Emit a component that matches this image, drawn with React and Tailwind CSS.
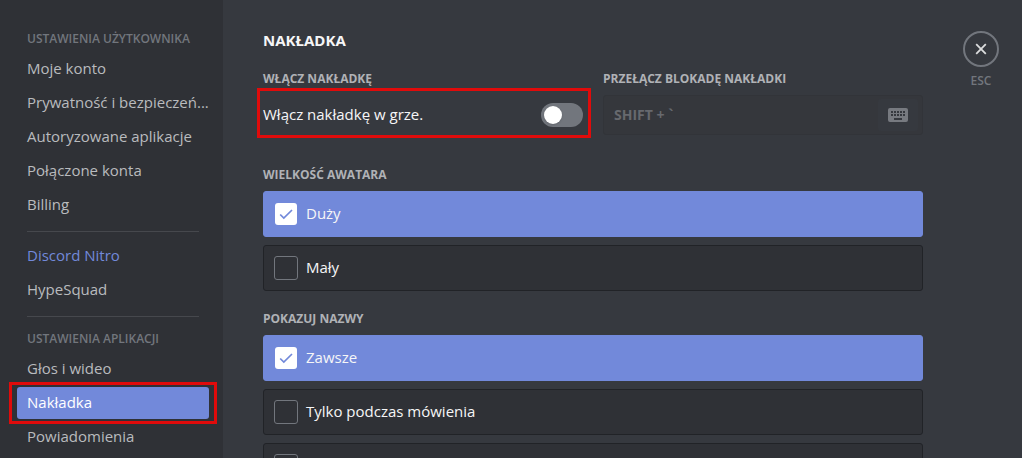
import React, { useState } from "react";

const userLinks = [
  "Moje konto",
  "Prywatność i bezpieczeń...",
  "Autoryzowane aplikacje",
  "Połączone konta",
  "Billing",
];

const appLinks = ["Głos i wideo", "Nakładka", "Powiadomienia"];

const NavItem = ({ label, active, accent, highlighted }) => {
  let tone = "text-[#b9bbbe] hover:bg-[#34373c]";
  if (accent) tone = "text-[#7289da]";
  if (active) tone = "bg-[#7289da] text-white font-medium";

  return (
    <li className="relative">
      <a
        href="#"
        aria-current={active ? "page" : undefined}
        className={`block rounded-[3px] pb-0.5 pl-2.5 text-[15px] leading-[30px] whitespace-nowrap ${tone}`}
      >
        {label}
      </a>
      {highlighted && (
        <span className="pointer-events-none absolute -inset-x-2 -inset-y-[5px] border-3 border-[#e00b0b]" />
      )}
    </li>
  );
};

const NavHeading = ({ children }) => (
  <h2 className="mb-1.5 px-2.5 text-xs leading-4 font-semibold whitespace-nowrap text-[#72767d] uppercase">
    {children}
  </h2>
);

const Separator = () => <hr className="mx-2.5 mt-2.5 mb-2 border-[#46484d]" />;

const Sidebar = () => (
  <nav className="w-[223px] shrink-0 bg-[#2f3136] pt-[31px] pr-3.5 pl-[17px]">
    <NavHeading>Ustawienia użytkownika</NavHeading>
    <ul className="flex flex-col gap-0.5">
      {userLinks.map((label) => (
        <NavItem key={label} label={label} />
      ))}
    </ul>
    <Separator />
    <ul className="flex flex-col gap-0.5">
      <NavItem label="Discord Nitro" accent />
      <NavItem label="HypeSquad" />
    </ul>
    <Separator />
    <div className="pt-1.5">
      <NavHeading>Ustawienia aplikacji</NavHeading>
    </div>
    <ul className="flex flex-col gap-0.5">
      {appLinks.map((label) => (
        <NavItem
          key={label}
          label={label}
          active={label === "Nakładka"}
          highlighted={label === "Nakładka"}
        />
      ))}
    </ul>
  </nav>
);

const labelClass = "mb-2 block text-xs leading-4 font-bold text-[#b0b2b6] uppercase";

const OptionGroup = ({ title, name, options }) => {
  const [selected, setSelected] = useState(options[0]);

  return (
    <fieldset>
      <legend className={labelClass}>{title}</legend>
      <div className="flex flex-col gap-2">
        {options.map((option) => {
          const checked = option === selected;
          return (
            <label
              key={option}
              className={`flex h-[46px] cursor-pointer items-center gap-2 rounded-[3px] border px-2.5 text-[15px] font-medium text-[#f6f6f7] ${
                checked ? "border-[#7289da] bg-[#7289da]" : "border-[#212327] bg-[#2f3136]"
              }`}
            >
              <span className="grid size-6 place-items-center">
                <input
                  type="radio"
                  name={name}
                  checked={checked}
                  onChange={() => setSelected(option)}
                  className={`col-start-1 row-start-1 appearance-none rounded-[3px] ${
                    checked ? "size-[22px] bg-white" : "size-6 border border-[#72767d]"
                  }`}
                />
                {checked && (
                  <svg
                    viewBox="0 0 18 18"
                    className="pointer-events-none col-start-1 row-start-1 size-[18px] text-[#7289da]"
                    fill="none"
                    stroke="currentColor"
                    strokeWidth="1.7"
                    aria-hidden="true"
                  >
                    <path d="M3.2 9.5l3.6 3.6L15 5" />
                  </svg>
                )}
              </span>
              <span className="pb-0.5">{option}</span>
            </label>
          );
        })}
      </div>
    </fieldset>
  );
};

const KeyboardIcon = () => (
  <svg viewBox="0 0 20 14" className="h-3.5 w-5" fill="currentColor" fillRule="evenodd" aria-hidden="true">
    <path d="M2 0h16a2 2 0 0 1 2 2v10a2 2 0 0 1-2 2H2a2 2 0 0 1-2-2V2a2 2 0 0 1 2-2zM3 3v2h2V3zM6 3v2h2V3zM9 3v2h2V3zM12 3v2h2V3zM15 3v2h2V3zM3 6v2h2V6zM6 6v2h2V6zM9 6v2h2V6zM12 6v2h2V6zM15 6v2h2V6zM6 10v2h8v-2z" />
  </svg>
);

const OverlayToggle = () => {
  const [enabled, setEnabled] = useState(false);

  return (
    <div>
      <h3 className={labelClass}>Włącz nakładkę</h3>
      <div className="relative flex h-10 items-center justify-between">
        <label htmlFor="overlay" className="pb-0.5 text-[15px] font-medium text-[#f6f6f7]">
          Włącz nakładkę w grze.
        </label>
        <input
          id="overlay"
          type="checkbox"
          role="switch"
          checked={enabled}
          onChange={(e) => setEnabled(e.target.checked)}
          className="h-6 w-[42px] cursor-pointer appearance-none rounded-full bg-[#72767d] p-[3px] before:block before:size-[18px] before:rounded-full before:bg-white before:shadow before:content-[''] checked:bg-[#7289da] checked:before:ml-[18px]"
        />
        <span className="pointer-events-none absolute -top-[7px] -right-2 -bottom-[3px] -left-1.5 border-3 border-[#e00b0b]" />
      </div>
    </div>
  );
};

const Keybind = () => (
  <div>
    <label htmlFor="keybind" className={labelClass}>
      Przełącz blokadę nakładki
    </label>
    <div className="flex h-10 items-center rounded-[3px] border border-[#323439] bg-[#35373c] pr-1 pl-2.5">
      <input
        id="keybind"
        type="text"
        value="SHIFT + `"
        readOnly
        className="min-w-0 flex-1 bg-transparent text-sm font-bold text-[#67696e] outline-none"
      />
      <button
        type="button"
        aria-label="Zmień skrót"
        className="flex h-8 w-10 items-center justify-center rounded-[3px] bg-[#36393f] text-[#777a80]"
      >
        <KeyboardIcon />
      </button>
    </div>
  </div>
);

const App = () => {
  return (
    <div className="flex h-screen overflow-hidden bg-[#36393f] font-['Open_Sans',sans-serif]">
      <Sidebar />
      <main className="min-w-0 flex-1 px-10 pt-[30px]">
        <h1 className="mb-[21px] text-[15px] leading-5 font-bold text-[#f6f6f7] uppercase">Nakładka</h1>
        <div className="mb-8 grid grid-cols-2 gap-5">
          <OverlayToggle />
          <Keybind />
        </div>
        <div className="flex flex-col gap-5">
          <OptionGroup title="Wielkość awatara" name="avatar" options={["Duży", "Mały"]} />
          <OptionGroup
            title="Pokazuj nazwy"
            name="names"
            options={["Zawsze", "Tylko podczas mówienia", "Nigdy"]}
          />
        </div>
      </main>
      <div className="mr-[23px] flex shrink-0 flex-col items-center gap-1.5 pt-[31px]">
        <button
          type="button"
          aria-label="Zamknij"
          className="flex size-9 items-center justify-center rounded-full border-2 border-[#72767d] text-[#dcddde]"
        >
          <svg viewBox="0 0 12 12" className="size-3" fill="none" stroke="currentColor" strokeWidth="1.8" aria-hidden="true">
            <path d="M1.2 1.2l9.6 9.6M10.8 1.2l-9.6 9.6" />
          </svg>
        </button>
        <span className="text-xs leading-4 font-semibold text-[#72767d]">ESC</span>
      </div>
    </div>
  );
};

export default App;
